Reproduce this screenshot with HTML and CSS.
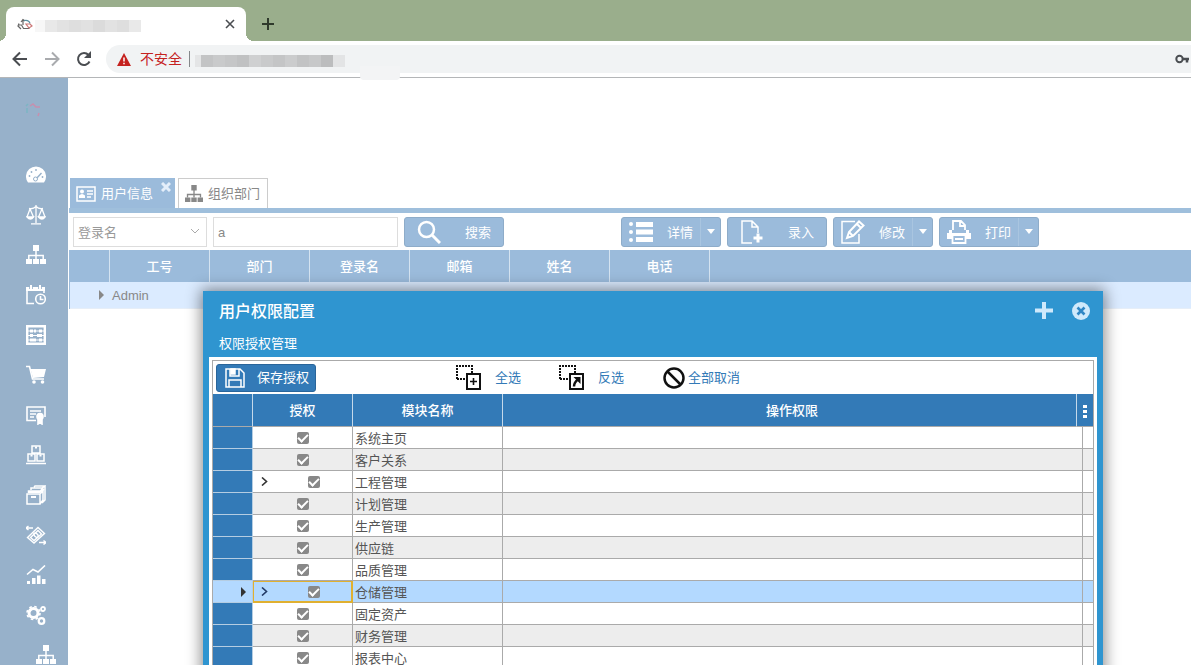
FILE: index.html
```
<!DOCTYPE html>
<html lang="zh-CN">
<head>
<meta charset="utf-8">
<title>用户权限配置</title>
<link rel="stylesheet" href="styles.css">
</head>
<body>
<svg class="defs" aria-hidden="true">
  <symbol id="sitemap" viewBox="0 0 20 20"><path fill="currentColor" d="M7 0h6v6H7zM0 14h6v5H0zM7 14h6v5H7zM14 14h6v5h-6z"/><path fill="none" stroke="currentColor" stroke-width="1.500" d="M10 5v9M2.800 14v-3.500h14.400V14"/></symbol>
</svg>
<div class="browser">
  <header class="tabstrip">
    <div class="btab">
      <svg class="favicon" viewBox="0 0 16 16" fill="none" stroke-width="1.200"><path stroke="#666" d="M4 6 6 3.500 8 5M6 3v6M1.500 9h3l2 3.500h6M2 7.500 1 10l3 3"/><path stroke="#5a8fa0" d="M7 4.500q5-1 6 3"/><path stroke="#c77" d="M9 8l4 0 2 2-3 2z"/></svg>
      <span class="blur blur-title"></span>
      <button class="plain" aria-label="关闭标签页"><svg width="10" height="10" viewBox="0 0 10 10"><path d="M1 1l8 8M9 1 1 9" stroke="#4a4d51" stroke-width="1.600"/></svg></button>
    </div>
    <button class="plain newtab" aria-label="新标签页"><svg width="12" height="12" viewBox="0 0 12 12"><path d="M6 0v12M0 6h12" stroke="#2f3a2c" stroke-width="2"/></svg></button>
  </header>
  <div class="navbar">
    <button class="plain nav" aria-label="后退"><svg width="16" height="16" viewBox="0 0 16 16" fill="none" stroke="#4a4d51" stroke-width="2"><path d="M15 8H2M8 1.500 1.500 8 8 14.500"/></svg></button>
    <button class="plain nav" aria-label="前进"><svg width="16" height="16" viewBox="0 0 16 16" fill="none" stroke="#a9abae" stroke-width="2"><path d="M1 8h13M8 1.500 14.500 8 8 14.500"/></svg></button>
    <button class="plain nav" aria-label="刷新"><svg width="16" height="16" viewBox="0 0 16 16"><path d="M13.500 10.500A6 6 0 1 1 12.500 4L14 5.500" fill="none" stroke="#4a4d51" stroke-width="2"/><path d="M15 0v7H8z" fill="#4a4d51"/></svg></button>
    <div class="omnibox">
      <svg width="14" height="13" viewBox="0 0 14 13"><path d="M7 0l7 13H0z" fill="#c5221f"/><path d="M7 4.500v4M7 9.800v1.500" stroke="#fff" stroke-width="1.500"/></svg>
      <span class="unsafe">不安全</span>
      <span class="blur blur-url"></span>
      <svg class="key" width="16" height="10" viewBox="0 0 16 10"><circle cx="4.500" cy="5" r="3.200" fill="none" stroke="#4a4d51" stroke-width="2"/><path d="M7 5h7M12 5v3.500" stroke="#4a4d51" stroke-width="2.500"/></svg>
    </div>
    <span class="smudge"></span>
  </div>
  <div class="app">
    <nav class="sidebar">
      <div class="logo"><svg width="22" height="22" viewBox="0 0 22 22" fill="none" stroke-width="1.500"><path stroke="#c78fae" d="M7 6l3-2 3 3h4M16 13l-1 3"/><path stroke="#7cb5c4" d="M4 8v5M5 4l-2 2"/></svg></div>
      <a href="#" aria-label="仪表盘"><svg viewBox="0 0 20 20"><path fill="currentColor" d="M2 17.500A10 10 0 1 1 18 17.500z"/><path stroke="#97b1ca" stroke-width="1.400" fill="none" d="M10 14 15.500 8"/><circle cx="9.500" cy="14" r="2" fill="#fff" stroke="#97b1ca"/><g fill="#97b1ca"><circle cx="3.500" cy="11" r=".9"/><circle cx="5.500" cy="7" r=".9"/><circle cx="10" cy="5" r=".9"/><circle cx="16.500" cy="12" r=".9"/></g></svg></a>
      <a href="#" aria-label="天平"><svg viewBox="0 0 20 20" fill="none" stroke="currentColor" stroke-width="1.300"><path d="M10 0v18M5 18.800h10M3 3.500q4 1 7-2 3 3 7 2M4 4 1 12M4 4l3.500 8M16 4l-3.500 8M16 4l3 8"/><path fill="currentColor" d="M1 12h6.500q-3 4-6.500 0zM12.500 12H19q-3 4-6.500 0z"/></svg></a>
      <a href="#" aria-label="组织"><svg><use href="#sitemap"/></svg></a>
      <a href="#" aria-label="日程"><svg viewBox="0 0 20 20" fill="none" stroke="currentColor" stroke-width="1.600"><path d="M8 18.500H1V3h17v5"/><path stroke-width="4" d="M0 4h19"/><path stroke-width="2" d="M5 0v4M14 0v4"/><path stroke="#97b1ca" stroke-width=".8" d="M3.500 0v4M6.500 0v4M12.500 0v4M15.500 0v4"/><circle cx="14.500" cy="14" r="4.800"/><path d="M14.500 11v3.500h3"/></svg></a>
      <a href="#" aria-label="算盘"><svg viewBox="0 0 20 20" fill="none" stroke="currentColor"><path stroke-width="2.400" d="M1.200 1.200h17.600v17.600H1.200z"/><path stroke-width="1.200" d="M1 6h18M1 10.500h18M1 15h18"/><path stroke-width="3" d="M4 6h3M8 6h2M13 6h3M4 10.500h3M11 10.500h5M4 15h6M13 15h3"/></svg></a>
      <a href="#" aria-label="采购"><svg viewBox="0 0 20 20"><path fill="none" stroke="currentColor" stroke-width="1.600" d="M0 1.500h3.500l3 12.500H18"/><path fill="currentColor" d="M4.500 4H20l-2 8-11 1z"/><circle cx="8" cy="17" r="1.800" fill="currentColor"/><circle cx="16.500" cy="17" r="1.800" fill="currentColor"/></svg></a>
      <a href="#" aria-label="证书"><svg viewBox="0 0 20 20" fill="none" stroke="currentColor" stroke-width="1.600"><path d="M10 15.500H1V2h18v10M4 6h11M4 9h6M4 12h4"/><circle cx="14" cy="11.500" r="3" fill="currentColor"/><path fill="currentColor" d="M12 14v5l2-1.500 2 1.500v-5"/></svg></a>
      <a href="#" aria-label="仓库"><svg viewBox="0 0 20 20" fill="none" stroke="currentColor" stroke-width="1.500"><path d="M6 1h8v7H6zM2 9h7v7H2zM11 9h7v7h-7zM0 18.500h20"/><path stroke-width="2" d="M9 2.500h2M4.500 10.500h2M13.500 10.500h2"/></svg></a>
      <a href="#" aria-label="资产"><svg viewBox="0 0 20 20" fill="none" stroke="currentColor" stroke-width="1.500"><path d="M1 9h13v10H1zM2.500 8V6h12l3-4M14 9l3-3v9l-3 4M5 5V3h11l3-2v14l-3 3M8 2l1-1h10"/><path stroke-width="2" d="M5 12h5M2 7h12l4-3"/></svg></a>
      <a href="#" aria-label="财务"><svg viewBox="0 0 20 20" fill="none" stroke="currentColor" stroke-width="1.400"><path d="M1.500 12.500 12 2.500l6.500 6-10.500 9.500zM4.500 12.500 12 5.500l3.500 3.500-7.500 6.500z"/><ellipse cx="10" cy="10.200" rx="1.600" ry="2.600" transform="rotate(-45 10 10.200)"/><path d="M0 3h7M2.500 1 0 3l2.500 2M13 17.500h7M17.500 15.500l2.500 2-2.500 2"/></svg></a>
      <a href="#" aria-label="报表"><svg viewBox="0 0 20 20"><path fill="none" stroke="currentColor" stroke-width="1.600" d="M1 9.500 7 4.500l5 2.500 7-6.500"/><path fill="currentColor" d="M1 16h3v3H1zM6 13h3.500v6H6zM11 10.500h3.500V19H11zM16 14h3.500v5H16z"/></svg></a>
      <a href="#" aria-label="设置"><svg viewBox="0 0 20 20" fill="none" stroke="currentColor"><circle cx="7.500" cy="8" r="4.500" stroke-width="3"/><circle cx="7.500" cy="8" r="6.500" stroke-width="1.600" stroke-dasharray="2.600 2.500"/><circle cx="17" cy="4" r="2" stroke-width="1.800"/><circle cx="15.500" cy="16" r="2.800" stroke-width="2.200"/></svg></a>
      <a href="#" class="sub" aria-label="部门"><svg><use href="#sitemap"/></svg></a>
    </nav>
    <main class="main">
      <div class="banner"></div>
      <div class="tabs" role="tablist">
        <div class="tab active">
          <svg width="20" height="16" viewBox="0 0 20 16"><path fill="none" stroke="#fff" stroke-width="1.500" d="M1 1h18v14H1z"/><circle cx="6" cy="5.500" r="2" fill="#fff"/><path fill="#fff" d="M3 12V9.500q3-3 6 0V12z"/><path stroke="#fff" stroke-width="1.400" d="M11 5h6M11 8h6M11 11h4"/></svg>
          <button class="plain" role="tab" aria-selected="true">用户信息</button>
          <button class="plain tab-x" aria-label="关闭"><svg width="10" height="10" viewBox="0 0 10 10"><path d="M1 1l8 8M9 1 1 9" stroke="#e4eefa" stroke-width="3"/></svg></button>
        </div>
        <div class="tab">
          <svg width="20" height="18"><use href="#sitemap"/></svg>
          <button class="plain" role="tab" aria-selected="false">组织部门</button>
        </div>
      </div>
      <div class="toolbar">
        <span class="select-box"><select aria-label="搜索字段"><option>登录名</option></select><svg width="8" height="5" viewBox="0 0 8 5"><path d="M0 0l4 4 4-4" fill="none" stroke="#aaa"/></svg></span>
        <input class="search" type="text" value="a" aria-label="关键字">
        <button class="tool search-btn"><svg width="24" height="24" viewBox="0 0 24 24" fill="none" stroke="#fff"><circle cx="9.500" cy="9.500" r="7.500" stroke-width="2.500"/><path stroke-width="3" d="M15 15l8 8"/></svg><span>搜索</span></button>
        <div class="actions">
          <div class="split"><button><svg width="24" height="22" viewBox="0 0 24 22" fill="#fff"><circle cx="2" cy="3" r="2"/><circle cx="2" cy="11" r="2"/><circle cx="2" cy="19" r="2"/><path d="M7 1h17v5H7zM7 8.500h17v5H7zM7 16h17v5H7z"/></svg><span>详情</span></button><button class="caret" aria-label="更多详情"></button></div>
          <button class="tool"><svg width="24" height="24" viewBox="0 0 24 24" fill="none" stroke="#fff" stroke-width="1.500"><path d="M12 23H2V1h10l6 6v6M12 1v6h6"/><path stroke-width="3" d="M18 13.500v9M13.500 18h9"/></svg><span>录入</span></button>
          <div class="split"><button><svg width="24" height="24" viewBox="0 0 24 24" fill="none" stroke="#fff" stroke-width="1.500"><path d="M14 1.500H1V23h17v-9"/><path stroke-width="2" d="M6 18l2-6L18 1.500l4.500 4L12 16zM16 4l4 4M8 12l4 4"/></svg><span>修改</span></button><button class="caret" aria-label="更多修改"></button></div>
          <div class="split"><button><svg width="24" height="24" viewBox="0 0 24 24"><path fill="none" stroke="#fff" stroke-width="1.800" d="M6 10V1h8l4 4v5M13 1v5h5"/><path fill="#fff" d="M2 10h3v3h14v-3h3v3h2v6h-5v-3H5v3H0v-6h2z"/><path fill="none" stroke="#fff" stroke-width="1.800" d="M5.500 16v7h13v-7M8 19h8"/></svg><span>打印</span></button><button class="caret" aria-label="更多打印"></button></div>
        </div>
      </div>
      <table class="users">
        <colgroup><col class="w40"><col class="w100"><col class="w100"><col class="w100"><col class="w100"><col class="w100"><col class="w100"><col></colgroup>
        <thead><tr><th></th><th>工号</th><th>部门</th><th>登录名</th><th>邮箱</th><th>姓名</th><th>电话</th><th></th></tr></thead>
        <tbody><tr><td class="mark"><i class="arrow"></i></td><td>Admin</td><td></td><td></td><td></td><td></td><td></td><td></td></tr></tbody>
      </table>
    </main>
  </div>

  <section class="dialog" role="dialog" aria-labelledby="dlg-title">
    <header class="dlg-head">
      <h1 id="dlg-title">用户权限配置</h1>
      <button class="plain" aria-label="最大化"><svg width="18" height="18" viewBox="0 0 18 18"><path d="M9 0v17M0 8.500h18" stroke="#cfe9fb" stroke-width="4"/></svg></button>
      <button class="plain" aria-label="关闭"><svg width="18" height="18" viewBox="0 0 18 18"><circle cx="9" cy="9" r="9" fill="#cfe9fb"/><path d="M5.500 5.500l7 7M12.500 5.500l-7 7" stroke="#2f86c4" stroke-width="2.600"/></svg></button>
    </header>
    <h2>权限授权管理</h2>
    <div class="dlg-body"><div class="panel">
      <div class="dlg-tools">
        <button class="save"><svg width="20" height="20" viewBox="0 0 20 20" fill="none" stroke="#fff" stroke-width="1.500"><path d="M1 1h14l4 4v14H1zM5 1v7h9V1M4 19v-7h12v7"/><path fill="#fff" d="M6 1h4v5H6z"/></svg><span>保存授权</span></button>
        <button class="plain act"><svg width="25" height="25" viewBox="0 0 25 25" fill="none" stroke="#111"><path stroke-width="2" stroke-dasharray="2 1" d="M1 14V1h15v8M1 14h9"/><path fill="#fff" stroke-width="2" d="M11 9h13v15H11z"/><path stroke-width="1.600" d="M17.500 13v7M14 16.500h7"/></svg><span>全选</span></button>
        <button class="plain act"><svg width="25" height="25" viewBox="0 0 25 25" fill="none" stroke="#111"><path stroke-width="2" stroke-dasharray="2 1" d="M1 14V1h15v8M1 14h9"/><path fill="#fff" stroke-width="2" d="M11 9h13v15H11z"/><path stroke-width="2.500" d="M15 21.500q0-4 4-7"/><path fill="#111" stroke="none" d="M14.500 12h7v7z"/></svg><span>反选</span></button>
        <button class="plain act clear"><svg width="22" height="22" viewBox="0 0 22 22" fill="none" stroke="#111" stroke-width="2.500"><circle cx="11" cy="11" r="9.500"/><path d="M4.500 4.500l13 13"/></svg><span>全部取消</span></button>
      </div>
      <table class="rights">
        <colgroup><col class="w40"><col class="w100"><col class="w150"><col><col class="w6"><col class="w10"></colgroup>
        <thead><tr><th></th><th>授权</th><th>模块名称</th><th>操作权限</th><th colspan="2"><button class="plain dots" aria-label="列菜单"><i></i><i></i><i></i></button></th></tr></thead>
        <tbody>
          <tr><td></td><td><div class="tree"><span class="mid"><input type="checkbox" checked aria-labelledby="m1"></span></div></td><td id="m1">系统主页</td><td colspan="2"></td><td></td></tr>
          <tr><td></td><td><div class="tree"><span class="mid"><input type="checkbox" checked aria-labelledby="m2"></span></div></td><td id="m2">客户关系</td><td colspan="2"></td><td></td></tr>
          <tr><td></td><td><div class="tree"><button class="plain exp" aria-label="展开"><svg width="7" height="9" viewBox="0 0 7 9"><path d="M1 .5l4.500 4L1 8.500" fill="none" stroke="#333" stroke-width="1.600"/></svg></button><span class="mid"><input type="checkbox" checked aria-labelledby="m3"></span></div></td><td id="m3">工程管理</td><td colspan="2"></td><td></td></tr>
          <tr><td></td><td><div class="tree"><span class="mid"><input type="checkbox" checked aria-labelledby="m4"></span></div></td><td id="m4">计划管理</td><td colspan="2"></td><td></td></tr>
          <tr><td></td><td><div class="tree"><span class="mid"><input type="checkbox" checked aria-labelledby="m5"></span></div></td><td id="m5">生产管理</td><td colspan="2"></td><td></td></tr>
          <tr><td></td><td><div class="tree"><span class="mid"><input type="checkbox" checked aria-labelledby="m6"></span></div></td><td id="m6">供应链</td><td colspan="2"></td><td></td></tr>
          <tr><td></td><td><div class="tree"><span class="mid"><input type="checkbox" checked aria-labelledby="m7"></span></div></td><td id="m7">品质管理</td><td colspan="2"></td><td></td></tr>
          <tr class="current"><td class="mark"><i class="arrow"></i></td><td class="focus"><div class="tree"><button class="plain exp" aria-label="展开"><svg width="7" height="9" viewBox="0 0 7 9"><path d="M1 .5l4.500 4L1 8.500" fill="none" stroke="#223a66" stroke-width="1.600"/></svg></button><span class="mid"><input type="checkbox" checked aria-labelledby="m8"></span></div></td><td id="m8">仓储管理</td><td colspan="2"></td><td></td></tr>
          <tr><td></td><td><div class="tree"><span class="mid"><input type="checkbox" checked aria-labelledby="m9"></span></div></td><td id="m9">固定资产</td><td colspan="2"></td><td></td></tr>
          <tr><td></td><td><div class="tree"><span class="mid"><input type="checkbox" checked aria-labelledby="m10"></span></div></td><td id="m10">财务管理</td><td colspan="2"></td><td></td></tr>
          <tr><td></td><td><div class="tree"><span class="mid"><input type="checkbox" checked aria-labelledby="m11"></span></div></td><td id="m11">报表中心</td><td colspan="2"></td><td></td></tr>
        </tbody>
      </table>
    </div></div>
  </section>
</div>
</body>
</html>
```
FILE: styles.css
```
* { box-sizing: border-box; }
body {
  margin: 0;
  background: #fff;
  font: 13px/18px "Liberation Sans", "Noto Sans CJK SC", sans-serif;
  color: #555;
}
button, input, select { font: inherit; color: inherit; margin: 0; }
svg { display: block; flex: none; }
.defs { position: absolute; width: 0; height: 0; }
.plain { padding: 0; border: 0; background: none; }
.browser { position: relative; display: flex; flex-direction: column; height: 100vh; overflow: hidden; }

/* browser chrome */
.tabstrip { display: flex; align-items: flex-end; flex: none; height: 41px; padding-left: 6px; background: #9aae8c; }
.btab {
  position: relative;
  display: flex; align-items: center;
  width: 240px; height: 34px; padding: 0 11px;
  background: #fff; border-radius: 8px 8px 0 0;
}
.btab::before, .btab::after { content: ""; position: absolute; bottom: 0; width: 8px; height: 8px; }
.btab::before { left: -8px; background: radial-gradient(circle at 0 0, transparent 8px, #fff 8px); }
.btab::after { right: -8px; background: radial-gradient(circle at 100% 0, transparent 8px, #fff 8px); }
.btab .plain { margin-left: auto; }
.favicon { width: 16px; height: 16px; }
.blur { flex: none; height: 12px; }
.blur-title {
  width: 106px; margin: 4px 0 0 2px;
  background: linear-gradient(90deg, #f7f7f7 0 10px, #e8e8e8 10px 22px, #e2e2e2 22px 34px, #dedede 34px 46px, #e1e1e1 46px 58px, #dbdbdb 58px 70px, #e2e2e2 70px 82px, #dedede 82px 94px, #e9e9e9 94px);
}
.newtab { padding: 11px 16px; }
.navbar { position: relative; display: flex; align-items: center; flex: none; height: 37px; padding-left: 12px; background: #fff; border-bottom: 1px solid #b4b6b8; }
.nav { width: 16px; margin-right: 16px; }
.omnibox { display: flex; align-items: center; flex: 1; height: 28px; margin-left: -2px; padding-left: 11px; background: #f1f3f4; border-radius: 14px 0 0 14px; }
.unsafe { margin-left: 9px; padding-right: 7px; border-right: 1px solid #85888b; color: #c5221f; font-size: 14px; line-height: 16px; }
.blur-url {
  width: 150px; margin: 4px 0 0 5px;
  background: linear-gradient(90deg, #e4e5e6 0 6px, #c3c4c5 6px 18px, #c9cacb 18px 30px, #c5c6c7 30px 42px, #c0c1c2 42px 54px, #cfd0d1 54px 66px, #c9cacb 66px 78px, #c4c5c6 78px 90px, #cbcccd 90px 102px, #c2c3c4 102px 114px, #c7c8c9 114px 126px, #bcbdbe 126px 138px, #e3e4e5 138px);
}
.key { margin-left: auto; }
.smudge { position: absolute; left: 360px; bottom: -3px; width: 40px; height: 14px; background: #f3f4f5; border-radius: 0 0 4px 4px; }

/* application */
.app { display: flex; flex: 1; min-height: 0; }
.sidebar { flex: none; width: 68px; overflow: hidden; background: #97b1ca; }
.sidebar a { display: flex; align-items: center; justify-content: center; height: 40px; padding-left: 4px; color: #fff; }
.sidebar a.sub { padding-left: 24px; }
.sidebar a svg { width: 20px; height: 20px; }
.logo { display: flex; justify-content: center; height: 77px; padding-top: 22px; }
.main { flex: 1; min-width: 0; padding-left: 1px; }
.banner { height: 100px; }
.tabs { display: flex; gap: 3px; height: 35px; padding-left: 1px; border-bottom: 5px solid #9fbfdc; }
.tab { position: relative; display: flex; align-items: center; gap: 4px; height: 30px; padding: 0 7px 0 5px; border: 1px solid #ccc; border-bottom: 0; color: #888; }
.tab.active { gap: 5px; padding: 0 21px 0 5px; background: #9bbbdb; border-color: #9bbbdb; color: #fff; }
.tab svg { color: #888; }
.tab-x { position: absolute; top: 3px; right: 3px; }
.toolbar { display: flex; align-items: center; height: 37px; padding-left: 4px; }
.select-box { display: flex; align-items: center; width: 134px; height: 30px; padding-right: 7px; border: 1px solid #ddd; }
.select-box select { flex: 1; appearance: none; padding: 2px 4px 0; border: 0; background: none; color: #999; }
.search { width: 185px; height: 30px; margin-left: 6px; padding: 2px 4px 0; border: 1px solid #ddd; color: #888; }
.tool, .split { display: flex; align-items: center; flex: none; width: 100px; height: 30px; background: #9bbbdb; border: 1px solid #8eacc9; border-radius: 3px; color: #fff; }
.tool span, .split span { padding-top: 2px; }
.tool { justify-content: space-between; padding: 0 12px; }
.search-btn { margin-left: 6px; }
.actions { display: flex; gap: 6px; margin-left: 117px; }
.split button { height: 28px; border: 0; background: none; }
.split button:first-child { display: flex; align-items: center; justify-content: space-between; flex: 1; padding: 0 7px; }
.split .caret { width: 20px; padding: 0 6px; border-left: 1px solid #a9c5e0; }
.caret::before { content: ""; display: block; border: 4px solid transparent; border-top: 5px solid #fff; border-bottom: 0; }

table { width: 100%; border-collapse: separate; border-spacing: 0; table-layout: fixed; }
th { padding: 2px 0 0; font-weight: 500; color: #fff; }
td { padding: 2px 2px 0; }
.w6 { width: 6px; }
.w10 { width: 10px; }
.w40 { width: 40px; }
.w100 { width: 100px; }
.w150 { width: 150px; }
.users { border-left: 1px solid #9bbbdb; }
.users th { height: 32px; background: #9bbbdb; border-right: 1px solid #d4e3f1; }
.users th:last-child { border-right: 0; }
.users td { height: 27px; background: #dbebff; border-bottom: 1px solid #e6eef8; color: #888; }
.arrow { display: block; width: 5px; margin-left: auto; border: 5px solid transparent; border-left-color: #333; border-right: 0; }
.users .arrow { border-left-color: #888; }
.mark { padding: 0 6px 0 0; }

/* permission dialog */
.dialog { position: absolute; top: 291px; left: 203px; width: 900px; padding: 0 6px 6px; background: #2f95d0; box-shadow: 0 0 14px 2px rgba(0, 0, 0, .45); }
.dlg-head { display: flex; align-items: center; gap: 19px; height: 39px; padding: 0 7px 0 10px; }
h1 { flex: 1; margin: 0; padding-top: 2px; font-size: 16px; font-weight: 500; color: #fff; }
h2 { margin: 0; padding: 1px 10px 0; font-size: 13px; font-weight: 400; line-height: 26px; color: #fff; }
.dlg-body { padding: 3px; background: #fff; }
.panel { border: 1px solid #aaa; }
.dlg-tools { display: flex; align-items: center; height: 33px; padding-left: 3px; }
.save { display: flex; align-items: center; justify-content: space-between; width: 100px; height: 28px; margin-right: 140px; padding: 0 6px 0 8px; border: 1px solid #2a659a; border-radius: 3px; background: #337ab7; color: #fff; }
.act { display: flex; align-items: center; gap: 14px; margin-right: 38px; color: #337ab7; }
.act.clear { gap: 3px; margin-left: 1px; }
.rights th { height: 33px; background: #337ab7; border-right: 1px solid #c5d9ea; border-bottom: 1px solid #aaa; }
.rights th:nth-child(4) { padding-left: 5px; }
.rights td { height: 22px; border-right: 1px solid #aaa; border-bottom: 1px solid #aaa; }
.rights tr > :last-child { border-right: 0; }
.rights td:first-child { background: #337ab7; border-color: #b5cde2; }
.rights tr:nth-child(even) td { background: #ededed; }
.rights tr:nth-child(even) td:first-child { background: #337ab7; }
.rights tr.current td, .rights tr.current td:first-child { background: #b3d9ff; }
.rights tr.current td.focus { box-shadow: inset 0 0 0 1px #e0b030; border-color: #e0b030; }
.rights tr td:nth-child(2) { padding: 0; }
.tree { display: flex; align-items: center; height: 21px; }
.exp { display: flex; justify-content: center; width: 22px; }
.mid { display: flex; flex: 1; justify-content: center; }
input[type="checkbox"] { display: grid; place-items: center; appearance: none; width: 12px; height: 12px; border-radius: 2px; background: #888; }
input[type="checkbox"]:checked::before { content: ""; width: 8px; height: 4px; border: solid #fff; border-width: 0 0 2px 2px; transform: translateY(-1px) rotate(-45deg); }
.dots { display: grid; gap: 2px; margin: 0 auto; }
.dots i { width: 4px; height: 3px; background: #fff; }
```
